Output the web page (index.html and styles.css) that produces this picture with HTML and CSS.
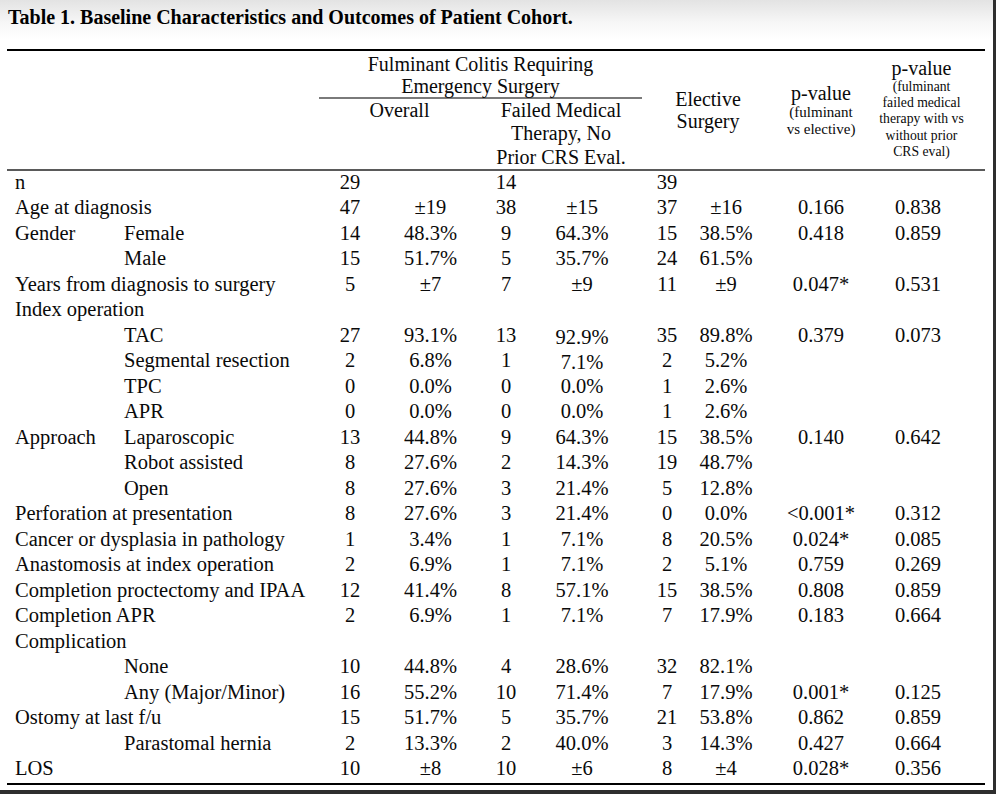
FILE: index.html
```html
<!DOCTYPE html>
<html lang="en">
<head>
<meta charset="utf-8">
<title>Table 1</title>
<link rel="stylesheet" href="styles.css">
</head>
<body>
<div class="page">
  <h1 class="title">Table 1. Baseline Characteristics and Outcomes of Patient Cohort.</h1>
  <table class="tbl">
    <colgroup>
      <col class="c-a"><col class="c-b"><col class="c-c"><col class="c-d"><col class="c-e"><col class="c-f"><col class="c-g"><col class="c-h"><col class="c-i"><col class="c-j">
    </colgroup>
    <thead>
      <tr class="h1">
        <th colspan="2" rowspan="2"></th>
        <th colspan="4" class="grp">Fulminant Colitis Requiring<br>Emergency Surgery</th>
        <th colspan="2" rowspan="2" class="mid">Elective<br>Surgery</th>
        <th rowspan="2" class="mid pv1">p-value<br><span class="small">(fulminant<br>vs elective)</span></th>
        <th rowspan="2" class="mid pv2">p-value<br><span class="small small2">(fulminant<br>failed medical<br>therapy with vs<br>without prior<br>CRS eval)</span></th>
      </tr>
      <tr class="h2">
        <th colspan="2" class="sub">Overall</th>
        <th colspan="2" class="sub">Failed Medical<br>Therapy, No<br>Prior CRS Eval.</th>
      </tr>
    </thead>
    <tbody>
      <tr><td colspan="2" class="lab">n</td><td>29</td><td></td><td>14</td><td class="pf"></td><td>39</td><td class="pe"></td><td></td><td class="pj"></td></tr>
      <tr><td colspan="2" class="lab">Age at diagnosis</td><td>47</td><td>±19</td><td>38</td><td class="pf">±15</td><td>37</td><td class="pe">±16</td><td>0.166</td><td class="pj">0.838</td></tr>
      <tr><td class="lab">Gender</td><td class="sl">Female</td><td>14</td><td>48.3%</td><td>9</td><td class="pf">64.3%</td><td>15</td><td class="pe">38.5%</td><td>0.418</td><td class="pj">0.859</td></tr>
      <tr><td class="lab"></td><td class="sl">Male</td><td>15</td><td>51.7%</td><td>5</td><td class="pf">35.7%</td><td>24</td><td class="pe">61.5%</td><td></td><td class="pj"></td></tr>
      <tr><td colspan="2" class="lab">Years from diagnosis to surgery</td><td>5</td><td>±7</td><td>7</td><td class="pf">±9</td><td>11</td><td class="pe">±9</td><td>0.047*</td><td class="pj">0.531</td></tr>
      <tr><td colspan="2" class="lab">Index operation</td><td></td><td></td><td></td><td class="pf"></td><td></td><td class="pe"></td><td></td><td class="pj"></td></tr>
      <tr><td class="lab"></td><td class="sl">TAC</td><td>27</td><td>93.1%</td><td>13</td><td class="pf"><span class="low">92.9%</span></td><td>35</td><td class="pe">89.8%</td><td>0.379</td><td class="pj">0.073</td></tr>
      <tr><td class="lab"></td><td class="sl">Segmental resection</td><td>2</td><td>6.8%</td><td>1</td><td class="pf"><span class="low">7.1%</span></td><td>2</td><td class="pe">5.2%</td><td></td><td class="pj"></td></tr>
      <tr><td class="lab"></td><td class="sl">TPC</td><td>0</td><td>0.0%</td><td>0</td><td class="pf">0.0%</td><td>1</td><td class="pe">2.6%</td><td></td><td class="pj"></td></tr>
      <tr><td class="lab"></td><td class="sl">APR</td><td>0</td><td>0.0%</td><td>0</td><td class="pf">0.0%</td><td>1</td><td class="pe">2.6%</td><td></td><td class="pj"></td></tr>
      <tr><td class="lab">Approach</td><td class="sl">Laparoscopic</td><td>13</td><td>44.8%</td><td>9</td><td class="pf">64.3%</td><td>15</td><td class="pe">38.5%</td><td>0.140</td><td class="pj">0.642</td></tr>
      <tr><td class="lab"></td><td class="sl">Robot assisted</td><td>8</td><td>27.6%</td><td>2</td><td class="pf">14.3%</td><td>19</td><td class="pe">48.7%</td><td></td><td class="pj"></td></tr>
      <tr><td class="lab"></td><td class="sl">Open</td><td>8</td><td>27.6%</td><td>3</td><td class="pf">21.4%</td><td>5</td><td class="pe">12.8%</td><td></td><td class="pj"></td></tr>
      <tr><td colspan="2" class="lab">Perforation at presentation</td><td>8</td><td>27.6%</td><td>3</td><td class="pf">21.4%</td><td>0</td><td class="pe">0.0%</td><td>&lt;0.001*</td><td class="pj">0.312</td></tr>
      <tr><td colspan="2" class="lab">Cancer or dysplasia in pathology</td><td>1</td><td>3.4%</td><td>1</td><td class="pf">7.1%</td><td>8</td><td class="pe">20.5%</td><td>0.024*</td><td class="pj">0.085</td></tr>
      <tr><td colspan="2" class="lab">Anastomosis at index operation</td><td>2</td><td>6.9%</td><td>1</td><td class="pf">7.1%</td><td>2</td><td class="pe">5.1%</td><td>0.759</td><td class="pj">0.269</td></tr>
      <tr><td colspan="2" class="lab">Completion proctectomy and IPAA</td><td>12</td><td>41.4%</td><td>8</td><td class="pf">57.1%</td><td>15</td><td class="pe">38.5%</td><td>0.808</td><td class="pj">0.859</td></tr>
      <tr><td colspan="2" class="lab">Completion APR</td><td>2</td><td>6.9%</td><td>1</td><td class="pf">7.1%</td><td>7</td><td class="pe">17.9%</td><td>0.183</td><td class="pj">0.664</td></tr>
      <tr><td colspan="2" class="lab">Complication</td><td></td><td></td><td></td><td class="pf"></td><td></td><td class="pe"></td><td></td><td class="pj"></td></tr>
      <tr><td class="lab"></td><td class="sl">None</td><td>10</td><td>44.8%</td><td>4</td><td class="pf">28.6%</td><td>32</td><td class="pe">82.1%</td><td></td><td class="pj"></td></tr>
      <tr><td class="lab"></td><td class="sl">Any (Major/Minor)</td><td>16</td><td>55.2%</td><td>10</td><td class="pf">71.4%</td><td>7</td><td class="pe">17.9%</td><td>0.001*</td><td class="pj">0.125</td></tr>
      <tr><td colspan="2" class="lab">Ostomy at last f/u</td><td>15</td><td>51.7%</td><td>5</td><td class="pf">35.7%</td><td>21</td><td class="pe">53.8%</td><td>0.862</td><td class="pj">0.859</td></tr>
      <tr><td class="lab"></td><td class="sl">Parastomal hernia</td><td>2</td><td>13.3%</td><td>2</td><td class="pf">40.0%</td><td>3</td><td class="pe">14.3%</td><td>0.427</td><td class="pj">0.664</td></tr>
      <tr><td colspan="2" class="lab">LOS</td><td>10</td><td>±8</td><td>10</td><td class="pf">±6</td><td>8</td><td class="pe">±4</td><td>0.028*</td><td class="pj">0.356</td></tr>
    </tbody>
  </table>
</div>
</body>
</html>
```
FILE: styles.css
```css
html, body {
  margin: 0;
  padding: 0;
}
body {
  width: 996px;
  height: 794px;
  overflow: hidden;
  background: #2e2e2e;
  font-family: "Liberation Serif", "Times New Roman", serif;
  color: #0a0a0a;
}
.page {
  width: 993px;
  height: 790px;
  box-sizing: border-box;
  padding: 7px 0 0 7px;
  background: linear-gradient(#e3e3e3 0, #f6f6f6 22px, #ffffff 40px);
}
.title {
  margin: 0 0 22px 1px;
  font-size: 20px;
  line-height: 20px;
  font-weight: bold;
  color: #000;
}
.tbl {
  width: 978px;
  table-layout: fixed;
  border-collapse: collapse;
  border-top: 2px solid #000;
  font-size: 20px;
}
.c-a { width: 109px; }
.c-b { width: 203px; }
.c-c { width: 62px; }
.c-d { width: 99px; }
.c-e { width: 52px; }
.c-f { width: 110px; }
.c-g { width: 50px; }
.c-h { width: 82px; }
.c-i { width: 94px; }
.c-j { width: 117px; }

thead {
  border-bottom: 2px solid #5a5a5a;
}
th {
  font-weight: normal;
  padding: 0;
  text-align: center;
}
.h1 { height: 46px; }
.h2 { height: 70px; }
.grp {
  vertical-align: top;
  line-height: 22px;
  padding-top: 2px;
  border-bottom: 2px solid #7a7a7a;
}
.sub {
  vertical-align: top;
  line-height: 23.3px;
  padding-top: 0;
}
.mid {
  vertical-align: middle;
  line-height: 22px;
}
.small {
  font-size: 15px;
  line-height: 17px;
  display: inline-block;
}
.small2 {
  font-size: 13.7px;
  line-height: 16.3px;
}
.pv2 {
  padding-right: 10px;
  padding-bottom: 3px;
}
tbody {
  border-bottom: 2px solid #000;
}
td {
  padding: 0 0 2px 0;
  height: 23.5px;
  line-height: 23.5px;
  font-size: 20.5px;
  text-align: center;
  white-space: nowrap;
}
td.lab {
  text-align: left;
  padding-left: 8px;
}
td.sl {
  text-align: left;
  padding-left: 8px;
}
td.pf { padding-right: 10px; }
td.pe { padding-right: 14px; }
td.pj { padding-right: 17px; }
.low {
  line-height: 0;
  vertical-align: -2px;
}
```
